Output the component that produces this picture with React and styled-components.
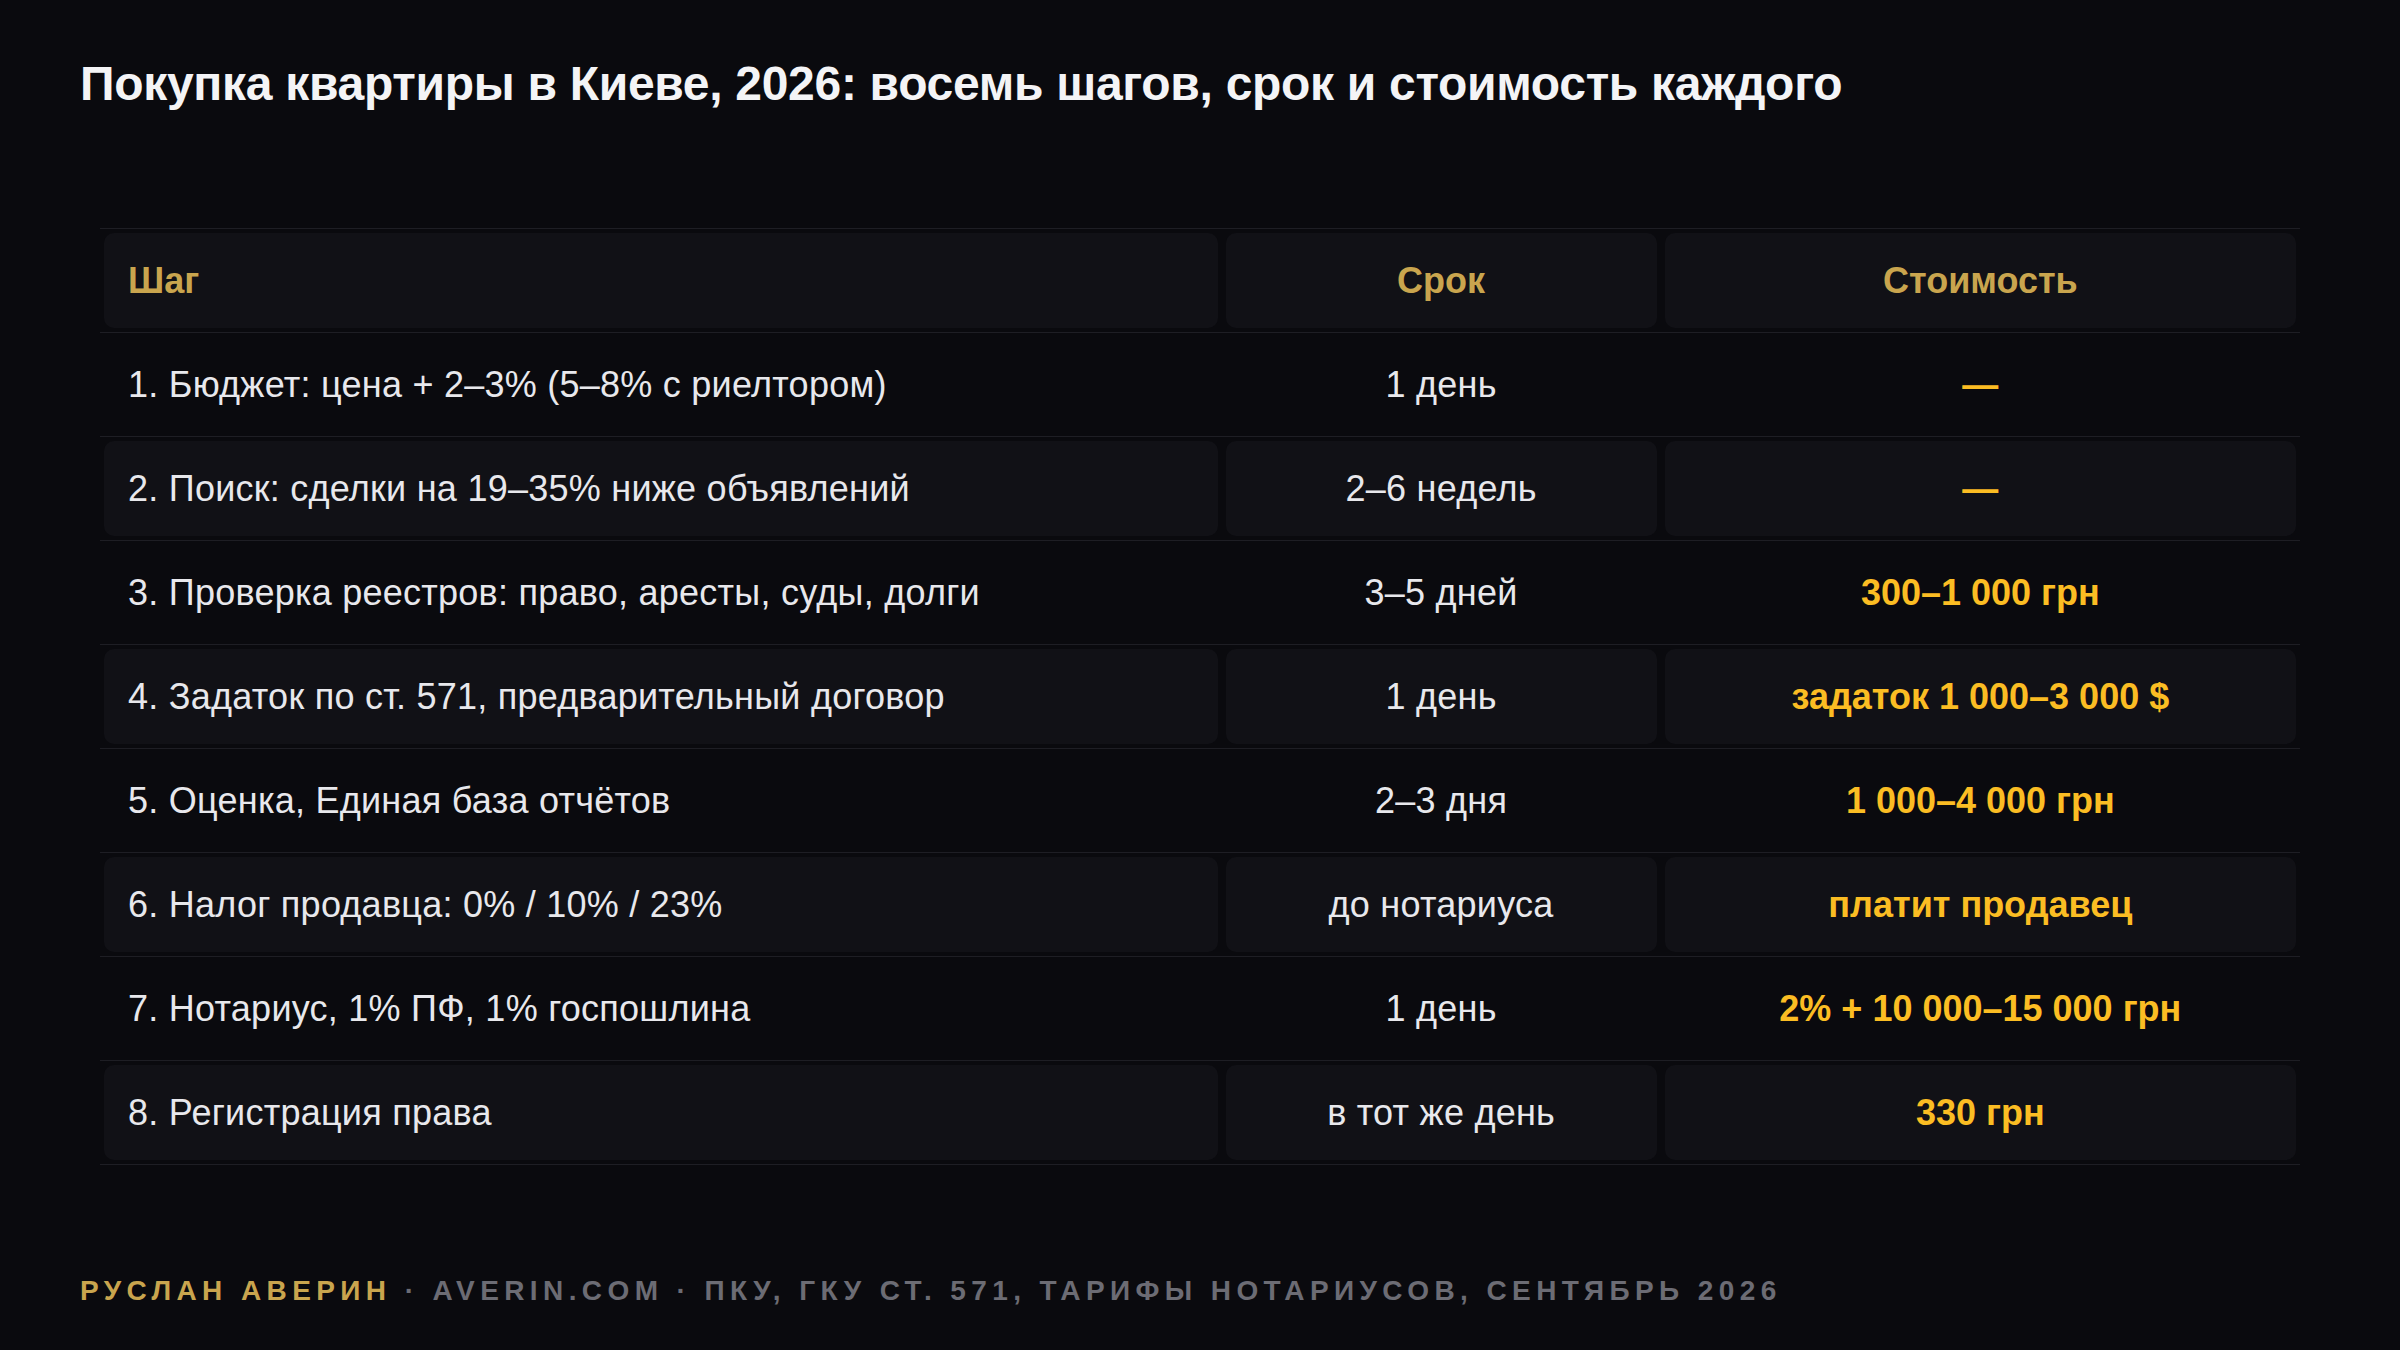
import React from "react";
import styled, { createGlobalStyle } from "styled-components";

const GlobalStyle = createGlobalStyle`
  html, body {
    margin: 0;
    padding: 0;
    background: #0a0a0e;
  }
  body {
    font-family: "Liberation Sans", Arial, sans-serif;
    -webkit-font-smoothing: antialiased;
  }
`;

const Page = styled.div`
  width: 2400px;
  height: 1350px;
  box-sizing: border-box;
  padding: 52px 80px 0 80px;
  background: #0a0a0e;
  display: flex;
  flex-direction: column;
`;

const Title = styled.h1`
  margin: 0;
  font-size: 48px;
  font-weight: 700;
  letter-spacing: -0.3px;
  color: #f4f4f6;
  line-height: 64px;
`;

const Table = styled.div`
  margin: 112px 0 0 20px;
  width: 2200px;
  display: flex;
  flex-direction: column;
  border-bottom: 1px solid #1e1e24;
`;

const Row = styled.div`
  display: grid;
  grid-template-columns: 1113fr 431fr 631fr;
  gap: 8px;
  padding: 4px;
  height: 104px;
  box-sizing: border-box;
  border-top: 1px solid #1e1e24;
`;

const Cell = styled.div`
  display: flex;
  align-items: center;
  justify-content: ${(p) => (p.$center ? "center" : "flex-start")};
  padding: 0 24px;
  border-radius: 10px;
  background: ${(p) => (p.$shade ? "#111116" : "transparent")};
  font-size: 36px;
  letter-spacing: ${(p) => (p.$accent ? "0" : "0.25px")};
  color: ${(p) => (p.$accent ? "#fbbd23" : "#e8e8ec")};
  font-weight: ${(p) => (p.$accent ? 700 : 400)};
`;

const HeadCell = styled(Cell)`
  color: #c9a54e;
  font-weight: 700;
  letter-spacing: 0;
`;

const Footer = styled.div`
  margin-top: 110px;
  font-size: 28px;
  font-weight: 700;
  letter-spacing: 5.4px;
  text-transform: uppercase;
  color: #6c6c74;
`;

const Author = styled.span`
  color: #c9a54e;
`;

const rows = [
  ["1. Бюджет: цена + 2–3% (5–8% с риелтором)", "1 день", "—"],
  ["2. Поиск: сделки на 19–35% ниже объявлений", "2–6 недель", "—"],
  ["3. Проверка реестров: право, аресты, суды, долги", "3–5 дней", "300–1 000 грн"],
  ["4. Задаток по ст. 571, предварительный договор", "1 день", "задаток 1 000–3 000 $"],
  ["5. Оценка, Единая база отчётов", "2–3 дня", "1 000–4 000 грн"],
  ["6. Налог продавца: 0% / 10% / 23%", "до нотариуса", "платит продавец"],
  ["7. Нотариус, 1% ПФ, 1% госпошлина", "1 день", "2% + 10 000–15 000 грн"],
  ["8. Регистрация права", "в тот же день", "330 грн"],
];

export default function App() {
  return (
    <Page>
      <GlobalStyle />
      <Title>Покупка квартиры в Киеве, 2026: восемь шагов, срок и стоимость каждого</Title>
      <Table>
        <Row>
          <HeadCell $shade>Шаг</HeadCell>
          <HeadCell $shade $center>Срок</HeadCell>
          <HeadCell $shade $center>Стоимость</HeadCell>
        </Row>
        {rows.map(([step, term, cost], i) => {
          const shade = i % 2 === 1;
          return (
            <Row key={i}>
              <Cell $shade={shade}>{step}</Cell>
              <Cell $shade={shade} $center>{term}</Cell>
              <Cell $shade={shade} $center $accent>{cost}</Cell>
            </Row>
          );
        })}
      </Table>
      <Footer>
        <Author>Руслан Аверин</Author> · averin.com · ПКУ, ГКУ ст. 571, тарифы нотариусов, сентябрь 2026
      </Footer>
    </Page>
  );
}
